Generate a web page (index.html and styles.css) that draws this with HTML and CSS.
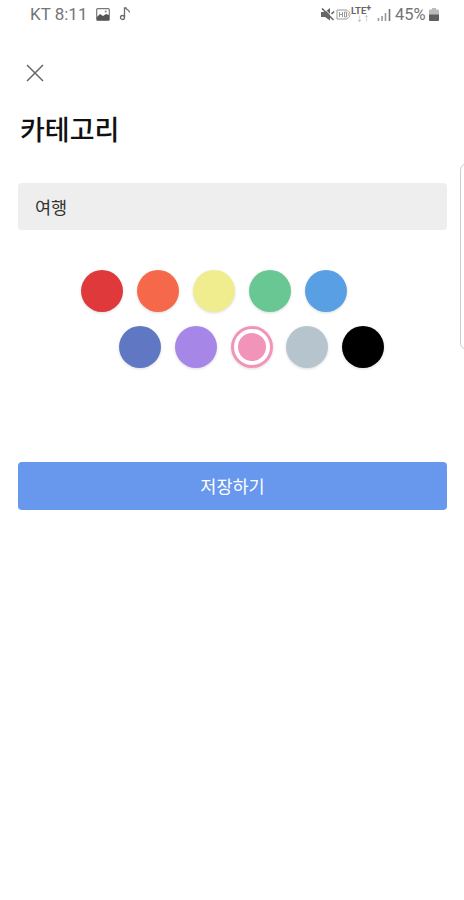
FILE: index.html
```html
<!DOCTYPE html>
<html lang="ko">
<head>
    <meta charset="UTF-8" />
    <title>카테고리</title>
    <link rel="stylesheet" href="styles.css">
</head>
<body>
    <div class="status">
        <span class="carrier">KT 8:11</span>
        <svg class="photo" width="14" height="13" viewBox="0 0 14 13">
            <rect x=".7" y=".7" width="12.6" height="11.6" rx="1" fill="none" stroke="#777" stroke-width="1.2"/>
            <path d="M1 12V9l3-3 3 2 3-2 3 1v5z" fill="#555"/>
            <circle cx="9.7" cy="3.6" r="1" fill="#888"/>
        </svg>
        <svg class="note" width="12" height="14" viewBox="0 0 12 14">
            <path d="M5.5 10.5V1H7c0 2 3.5 1.5 3.5 4.5" fill="none" stroke="#6a6a6a" stroke-width="1.3"/>
            <circle cx="3.5" cy="10.5" r="2" fill="none" stroke="#6a6a6a" stroke-width="1.3"/>
        </svg>
        <svg class="mute" width="14" height="13" viewBox="0 0 14 13">
            <path d="M0 4h4l5-4v12.5L4 9H0z" fill="#666"/>
            <path d="M2.5 0l11 11" stroke="#fff" stroke-width="1"/>
            <path d="M1 .5l11.5 11.5M10.5 6l2.5-2.5" stroke="#666" stroke-width="1.6"/>
        </svg>
        <svg class="hd" width="15" height="11" viewBox="0 0 15 11">
            <path d="M11 1H1v9h10" fill="none" stroke="#999"/>
            <path d="M3.5 3v5M6.5 3v5M3.5 5.5h3M8.5 3v5h2V3z" fill="none" stroke="#999"/>
            <path d="M11 1.5c4 1 4 7 0 8M11.5 4c1.5.5 1.5 2.5 0 3" fill="none" stroke="#aaa"/>
        </svg>
        <span class="lte"><b>LTE<sup>+</sup></b><i>↓↑</i></span>
        <svg class="signal" width="14" height="13" viewBox="0 0 14 13">
            <path d="M1.5 10v3M5 8v5M8.5 5v8" stroke="#999" stroke-width="1.6"/>
            <path d="M12.5 1v12" stroke="#777" stroke-width="1.6"/>
        </svg>
        <span class="percent">45%</span>
        <svg class="battery" width="10" height="13" viewBox="0 0 10 13">
            <path d="M3 0h4v1.5h2q1 0 1 1V7H0V2.5q0-1 1-1h2z" fill="#bbb"/>
            <path d="M0 6.5h10V12q0 1-1 1H1q-1 0-1-1z" fill="#606060"/>
        </svg>
    </div>

    <div class="page">
        <svg class="close" width="18" height="18" viewBox="0 0 18 18">
            <path d="M1 1l16 16M17 1L1 17" stroke="#666" stroke-width="1.5"/>
        </svg>
        <h1>카테고리</h1>
        <input class="name" type="text" value="여행">
        <ul class="colors">
            <li class="red"></li>
            <li class="orange"></li>
            <li class="yellow"></li>
            <li class="green"></li>
            <li class="blue"></li>
        </ul>
        <ul class="colors second">
            <li class="indigo"></li>
            <li class="purple"></li>
            <li class="pink on"></li>
            <li class="gray"></li>
            <li class="black"></li>
        </ul>
        <button class="save">저장하기</button>
    </div>

    <div class="edge"></div>
</body>
</html>
```

FILE: styles.css
```css
*{ margin:0; padding:0; box-sizing: border-box;}
li{ list-style-type: none;}
body{
    position: relative;
    height: 900px;
    overflow: hidden;
    background: #fff;
    font-family: Roboto,"Noto Sans CJK KR",sans-serif;
}
.status{
    display: flex;
    align-items: center;
    height: 28px;
    padding: 0 25px 0 30px;
    color: #757575;
    font-size: 17px;
}
.status svg{
    flex: none;
}
.carrier{
    width: 66px;
    white-space: nowrap;
}
.note{
    margin-left: 9px;
}
.mute{
    margin-left: auto;
}
.hd{
    margin-left: 1px;
}
.lte{
    width: 24px;
    height: 20px;
    margin: 1px 2px 0 0;
    color: #666;
    font-size: 9.5px;
    line-height: 11px;
}
.lte b{
    display: block;
    height: 11px;
    white-space: nowrap;
}
.lte sup{
    font-size: 9px;
    line-height: 0;
    vertical-align: 3px;
}
.lte i{
    display: block;
    padding-left: 5px;
    color: #aaa;
    font-size: 7px;
    font-style: normal;
    line-height: 7px;
}
.signal{
    margin-right: 1px;
}
.percent{
    width: 32px;
    margin: 0 2px 0 3px;
    font-size: 16.5px;
    white-space: nowrap;
}
.page{
    padding: 36px 17px 0 18px;
}
.close{
    display: block;
    margin-left: 8px;
}
.page h1{
    height: 40px;
    margin: 29px 0 0 2px;
    color: #111;
    font-size: 27px;
    font-weight: 500;
    line-height: 40px;
}
.name{
    display: block;
    width: 100%;
    height: 47px;
    margin-top: 32px;
    padding: 0 17px 1px;
    border: none;
    border-radius: 4px;
    outline: none;
    background: #eee;
    color: #333;
    font-family: inherit;
    font-size: 17.5px;
}
.colors{
    display: flex;
    gap: 13.8px;
    margin: 40.4px 0 0 63.4px;
}
.colors.second{
    margin: 13.6px 0 0 101px;
}
.colors li{
    width: 42px;
    height: 42px;
    border-radius: 50%;
    box-shadow: 0 1px 3px rgba(0,0,0,.14);
}
.red{ background: #df393b;}
.orange{ background: #f5694a;}
.yellow{ background: #f0ed8e;}
.green{ background: #68c793;}
.blue{ background: #599fe3;}
.indigo{ background: #6078c4;}
.purple{ background: #a687e8;}
.pink{ background: #f294b9;}
.gray{ background: #b6c4ce;}
.black{ background: #000;}
.colors li.on{
    padding: 3px;
}
.colors li.on::before{
    content: "";
    display: block;
    box-sizing: border-box;
    width: 36px;
    height: 36px;
    border: 4px solid #fff;
    border-radius: 50%;
}
.save{
    display: block;
    width: 100%;
    height: 47.5px;
    margin-top: 94.5px;
    padding-bottom: 1px;
    border: none;
    border-radius: 4px;
    background: #6897ee;
    color: #fff;
    font-family: inherit;
    font-size: 17.5px;
}
/* 화면 오른쪽 엣지 패널 */
.edge{
    position: absolute;
    top: 163px;
    right: -12px;
    width: 16px;
    height: 187px;
    border: 1px solid #ccc;
    border-radius: 7px;
    background: #fff;
}
```
